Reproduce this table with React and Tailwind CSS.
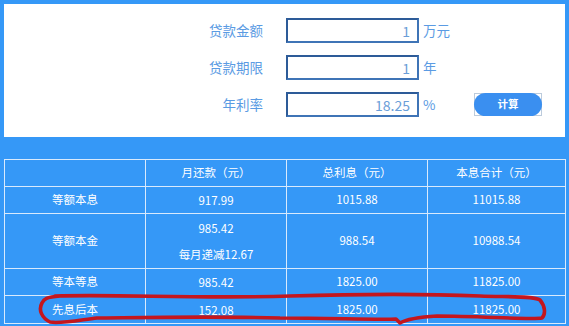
import React from "react";

const font = { fontFamily: '"Noto Sans CJK SC", "Noto Sans", sans-serif' };

function Field({ label, value, unit, button }) {
  return (
    <div className="flex items-center h-[25px]">
      <div className="w-[259px] text-right text-[13.5px] text-[#5b9be3] leading-none">{label}</div>
      <div className="ml-[23px] w-[133px] h-[25px] border-2 border-t-[#2d5b98] border-l-[#2d5b98] border-r-[#3f74b6] border-b-[#3f74b6] bg-white flex items-center justify-end pr-[7px] text-[14px] text-[#6a9ed8] leading-none">
        {value}
      </div>
      <div className="ml-[4px] w-[30px] text-[13.5px] text-[#5b9be3] leading-none">{unit}</div>
      {button && (
        <div className="ml-[21px] w-[68px] h-[23px] border border-[#bccbdc]">
          <div className="-m-px w-[68px] h-[23px] rounded-full bg-[#3a8ff0] flex items-center justify-center text-white text-[10.5px] font-bold leading-none">
            计算
          </div>
        </div>
      )}
    </div>
  );
}

const rows = [
  { name: "等额本息", a: ["917.99"], b: "1015.88", c: "11015.88", h: "h-[27px]" },
  { name: "等额本金", a: ["985.42", "每月递减12.67"], b: "988.54", c: "10988.54", h: "h-[55px]" },
  { name: "等本等息", a: ["985.42"], b: "1825.00", c: "11825.00", h: "h-[27px]" },
  { name: "先息后本", a: ["152.08"], b: "1825.00", c: "11825.00", h: "h-[28px]" },
];

export default function App() {
  const td = "border border-[#d9eafd] text-center text-white text-[11.5px] p-0 align-middle";
  return (
    <div className="relative w-[569px] h-[326px] overflow-hidden bg-[#3598f7] pt-[4px] px-[4px]" style={font}>
      <div className="bg-white h-[133px] pt-[14px] flex flex-col gap-[12px]">
        <Field label="贷款金额" value="1" unit="万元" />
        <Field label="贷款期限" value="1" unit="年" />
        <Field label="年利率" value="18.25" unit="%" button />
      </div>
      <table className="mt-[22px] w-[561px] table-fixed border-collapse">
        <colgroup>
          <col className="w-[141px]" />
          <col className="w-[141px]" />
          <col className="w-[141px]" />
          <col className="w-[138px]" />
        </colgroup>
        <tbody>
          <tr className="h-[27px]">
            <td className={td}></td>
            <td className={td}>月还款（元）</td>
            <td className={td}>总利息（元）</td>
            <td className={td}>本息合计（元）</td>
          </tr>
          {rows.map((r) => (
            <tr key={r.name} className={r.h}>
              <td className={td}>{r.name}</td>
              <td className={td}>
                <div className="flex flex-col gap-[12px] leading-[14px]">
                  {r.a.map((x) => (
                    <span key={x}>{x}</span>
                  ))}
                </div>
              </td>
              <td className={td}>{r.b}</td>
              <td className={td}>{r.c}</td>
            </tr>
          ))}
        </tbody>
      </table>
      <svg className="absolute left-0 top-0 pointer-events-none" width="569" height="326" viewBox="0 0 569 326">
        <path
          d="M 55 296 C 120 294, 200 299, 290 296 C 360 294, 430 294, 480 296 C 510 297, 535 296, 540 300 C 545 306, 546 314, 542 318 C 530 320, 480 316, 437 316 C 420 317, 405 320, 400 323 L 396 319 C 380 320, 330 318, 280 318 C 200 316, 120 318, 97 318 C 80 320, 60 324, 50 322 C 42 318, 38 310, 42 303 C 44 299, 46 297, 60 296"
          fill="none"
          stroke="#c4161e"
          strokeWidth="3.6"
          strokeLinecap="round"
          strokeLinejoin="round"
        />
      </svg>
    </div>
  );
}
